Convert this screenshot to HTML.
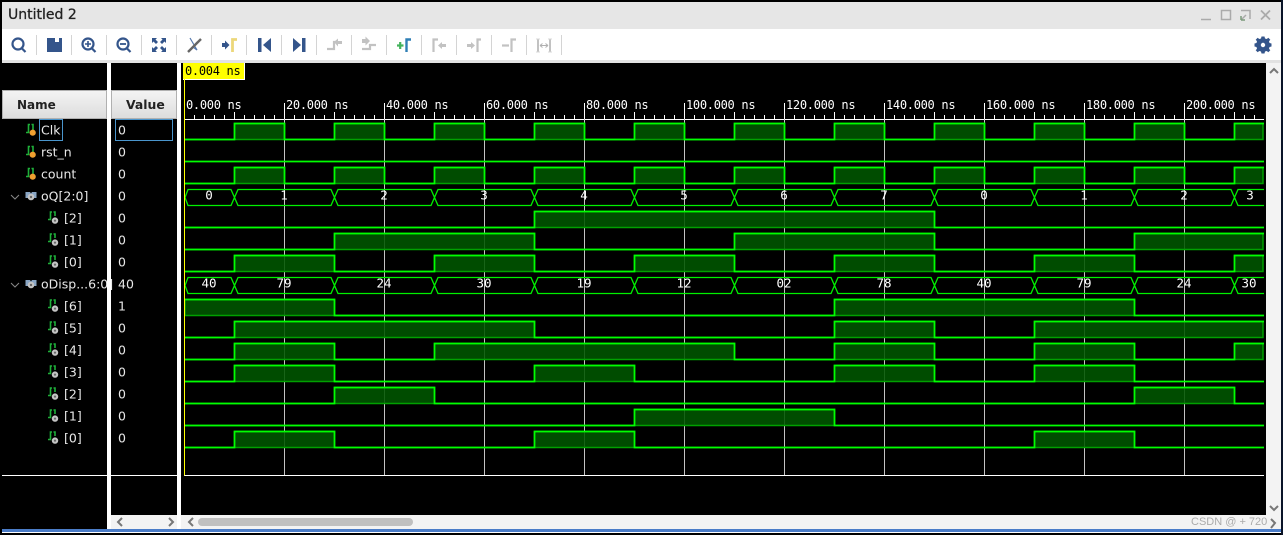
<!DOCTYPE html>
<html><head><meta charset="utf-8"><style>
html,body{margin:0;padding:0;background:#000;width:1283px;height:535px;overflow:hidden}
svg{display:block}
.n{font:12.5px "DejaVu Sans",sans-serif;fill:#e8e8e8}
.t{font:12px "DejaVu Sans Mono","Liberation Mono",monospace;letter-spacing:-.3px;fill:#fff}
.b{font:12.5px "DejaVu Sans Mono","Liberation Mono",monospace;fill:#fff;text-anchor:middle}
.f{fill:#005600;fill-opacity:.88;stroke:#00a000;stroke-width:1.5}
.l{fill:none;stroke:#00ff00;stroke-width:1.7}
.h{fill:none;stroke:#00f000;stroke-width:1.3}
.s{stroke:#d4d4d4;stroke-width:1}
.ib{fill:none;stroke:#34558b;stroke-width:2.2}
.ig{fill:none;stroke:#c2c2c2;stroke-width:2.2}
.ch{fill:none;stroke:#777;stroke-width:2}
.sg{fill:none;stroke:#1fb03a;stroke-width:1.6}
.od{fill:#f0a030}
.gd{fill:#c4c4c4}
.gi{fill:#666}
</style></head><body>
<svg width="1283" height="535" viewBox="0 0 1283 535" xmlns="http://www.w3.org/2000/svg">
<rect width="1283" height="535" fill="#000"/>
<!-- title bar + toolbar -->
<rect x="2" y="2" width="1279" height="27" fill="#e6e6e6"/>
<rect x="2" y="29" width="1279" height="31" fill="#fff"/>
<rect x="2" y="60" width="1279" height="3" fill="#e2e2e2"/>
<text x="8" y="19" style="font:14px 'DejaVu Sans',sans-serif;fill:#222;stroke:#222;stroke-width:.25">Untitled 2</text>
<!-- window controls -->
<path d="M1201 19.500H1211" stroke="#aaa" stroke-width="1.500"/>
<rect x="1221.500" y="10.500" width="9" height="9" fill="none" stroke="#aaa" stroke-width="1.500"/>
<path d="M1241 10.500H1250V19M1241 20L1246 15" fill="none" stroke="#aaa" stroke-width="1.500"/>
<path d="M1241 20V16M1241 20H1245" fill="none" stroke="#7c9a7c" stroke-width="1.500"/>
<path d="M1261 10.500L1270 19.500M1270 10.500L1261 19.500" stroke="#aaa" stroke-width="1.800"/>
<!-- separators -->
<path class="s" d="M36.500 35V55M71.500 35V55M106.500 35V55M141.500 35V55M176.500 35V55M211.500 35V55M246.500 35V55M281.500 35V55M316.500 35V55M351.500 35V55M386.500 35V55M421.500 35V55M456.500 35V55M491.500 35V55M526.500 35V55M561.500 35V55"/>
<!-- magnifiers -->
<circle cx="18" cy="44" r="5.500" class="ib"/><path d="M22 48.500L25.500 52" class="ib" stroke-width="2.800"/>
<path d="M47 38H55V42H59V38H62V52H47Z" fill="#34558b"/>
<circle cx="88" cy="44" r="5.500" class="ib"/><path d="M92 48.500L95.500 52" class="ib" stroke-width="2.800"/><path d="M85 44H91M88 41V47" stroke="#34558b" stroke-width="1.600"/>
<circle cx="123" cy="44" r="5.500" class="ib"/><path d="M127 48.500L130.500 52" class="ib" stroke-width="2.800"/><path d="M120 44H126" stroke="#34558b" stroke-width="1.800"/>
<!-- fit -->
<path d="M152 38H157L155.500 39.500L158 42L156 44L153.500 41.500L152 43ZM166 38H161L162.500 39.500L160 42L162 44L164.500 41.500L166 43ZM152 52H157L155.500 50.500L158 48L156 46L153.500 48.500L152 47ZM166 52H161L162.500 50.500L160 48L162 46L164.500 48.500L166 47Z" fill="#34558b"/>
<!-- cursor off -->
<path d="M190 38L197 50L193 47L197 42" fill="none" stroke="#5578ad" stroke-width="1.200"/>
<path d="M188 52L201 39" stroke="#666" stroke-width="2.400"/>
<!-- goto cursor -->
<path d="M222 43H225V40.500L229.500 45L225 49.500V47H222Z" fill="#34558b"/>
<path d="M232.500 52V39.500H237" fill="none" stroke="#ecd77a" stroke-width="2.800"/>
<!-- begin/end -->
<path d="M258 38H261.500V52H258ZM263 45L271 38V52Z" fill="#34558b"/>
<path d="M293 38L301 45L293 52ZM302 38H305.500V52H302Z" fill="#34558b"/>
<!-- gray 1 -->
<path d="M327 49H334V42H337" class="ig"/><path d="M334 42L338 38.500V41H342V44H338V46.500Z" fill="#c2c2c2"/>
<!-- gray 2 -->
<path d="M362 43V39H365.500V36.500L370 41L365.500 45.500V43Z" fill="#c2c2c2"/><path d="M362 49H370V45H376" class="ig"/>
<!-- add marker -->
<path d="M397 45.500H403.500M400.200 42V49" stroke="#44b35c" stroke-width="2.200"/>
<path d="M406.500 52V39.500H411" fill="none" stroke="#2f7fb5" stroke-width="2.400"/>
<!-- gray markers -->
<path d="M433.500 52V39.500H438" class="ig"/><path d="M438 45.500L442 42V44H446V47H442V49Z" fill="#c2c2c2"/>
<path d="M467 44H471V42L475 45.500L471 49V47H467Z" fill="#c2c2c2"/><path d="M477.500 52V39.500H481" class="ig"/>
<path d="M502 45.500H509" class="ig"/><path d="M511.500 52V39.500H516" class="ig"/>
<path d="M538 39V52M550 39V52" stroke="#c2c2c2" stroke-width="2"/><path d="M540 45.500H548M540 45.500L542.500 43.500M540 45.500L542.500 47.500M548 45.500L545.500 43.500M548 45.500L545.500 47.500" stroke="#b0b0b0" stroke-width="1" fill="none"/><path d="M536 39H540M536 52H540M548 39H552M548 52H552" stroke="#d8d8d8" stroke-width="1"/>
<!-- gear -->
<path d="M1261.500 38.500H1264.500L1265 40.500L1266.800 41L1268.300 39.700L1270.300 41.700L1269 43.200L1269.500 45L1271.500 45.500V48.500L1269.500 49L1269 50.800L1270.300 52.300L1268.300 54.300L1266.800 53L1265 53.500L1264.500 55.500H1261.500L1261 53.500L1259.200 53L1257.700 54.300L1255.700 52.300L1257 50.800L1256.500 49L1254.500 48.500V45.500L1256.500 45L1257 43.200L1255.700 41.700L1257.700 39.700L1259.200 41L1261 40.500Z" fill="#34558b" transform="translate(0,-2)"/>
<circle cx="1263" cy="45" r="2.200" fill="#fff"/>
<!-- marker label -->
<rect x="183" y="63" width="61" height="16" fill="#ffff00"/>
<path d="M183 79.500H244.500V63" fill="none" stroke="#fff" stroke-width="1"/>
<text x="185" y="75" class="t" style="fill:#000">0.004 ns</text>
<!-- header buttons -->
<defs><linearGradient id="g" x1="0" y1="0" x2="0" y2="1"><stop offset="0" stop-color="#f4f4f4"/><stop offset="1" stop-color="#dcdcdc"/></linearGradient></defs>
<rect x="2.500" y="90.500" width="104" height="28" fill="url(#g)" stroke="#b0b0b0"/>
<rect x="111.500" y="90.500" width="65" height="28" fill="url(#g)" stroke="#b0b0b0"/>
<text x="17" y="109" style="font:bold 12px 'DejaVu Sans',sans-serif;fill:#222">Name</text>
<text x="126" y="109" style="font:bold 12.400px 'DejaVu Sans',sans-serif;fill:#222">Value</text>
<!-- names -->
<g class="n">
<text x="41" y="134.500">Clk</text><text x="41" y="156.500">rst_n</text><text x="41" y="178.500">count</text><text x="41" y="200.500">oQ[2:0]</text>
<text x="64" y="222.500">[2]</text><text x="64" y="244.500">[1]</text><text x="64" y="266.500">[0]</text>
<text x="41" y="288.500">oDisp...6:0]</text>
<text x="64" y="310.500">[6]</text><text x="64" y="332.500">[5]</text><text x="64" y="354.500">[4]</text><text x="64" y="376.500">[3]</text><text x="64" y="398.500">[2]</text><text x="64" y="420.500">[1]</text><text x="64" y="442.500">[0]</text>
<text x="118" y="134.500">0</text><text x="118" y="156.500">0</text><text x="118" y="178.500">0</text><text x="118" y="200.500">0</text><text x="118" y="222.500">0</text><text x="118" y="244.500">0</text><text x="118" y="266.500">0</text><text x="118" y="288.500">40</text><text x="118" y="310.500">1</text><text x="118" y="332.500">0</text><text x="118" y="354.500">0</text><text x="118" y="376.500">0</text><text x="118" y="398.500">0</text><text x="118" y="420.500">0</text><text x="118" y="442.500">0</text>
</g>
<!-- name icons: top level -->
<path class="sg" d="M26 132.500H28.500V124.500H30M31.500 124.500H33V130"/><circle cx="32.700" cy="132.700" r="3.100" class="od"/>
<path class="sg" d="M26 154.500H28.500V146.500H30M31.500 146.500H33V152"/><circle cx="32.700" cy="154.700" r="3.100" class="od"/>
<path class="sg" d="M26 176.500H28.500V168.500H30M31.500 168.500H33V174"/><circle cx="32.700" cy="176.700" r="3.100" class="od"/>
<path d="M11 195L15 199L19 195" fill="none" stroke="#888" stroke-width="1"/>
<path d="M11 283L15 287L19 283" fill="none" stroke="#888" stroke-width="1"/>
<path d="M25.500 192H30L31 193.500L32 192H36.500V198H25.500Z" fill="#8aa6c4"/><circle cx="31" cy="197" r="3.300" class="gd"/><circle cx="31" cy="197" r="1.200" class="gi"/>
<path d="M25.500 280H30L31 281.500L32 280H36.500V286H25.500Z" fill="#8aa6c4"/><circle cx="31" cy="285" r="3.300" class="gd"/><circle cx="31" cy="285" r="1.200" class="gi"/>
<!-- child icons -->
<path class="sg" d="M48 219.500H50.500V212H52M53.500 212H55V216"/><circle cx="55" cy="220.600" r="3.200" class="gd"/><circle cx="55" cy="220.600" r="1.100" class="gi"/>
<path class="sg" d="M48 241.500H50.500V234H52M53.500 234H55V238"/><circle cx="55" cy="242.600" r="3.200" class="gd"/><circle cx="55" cy="242.600" r="1.100" class="gi"/>
<path class="sg" d="M48 263.500H50.500V256H52M53.500 256H55V260"/><circle cx="55" cy="264.600" r="3.200" class="gd"/><circle cx="55" cy="264.600" r="1.100" class="gi"/>
<path class="sg" d="M48 307.500H50.500V300H52M53.500 300H55V304"/><circle cx="55" cy="308.600" r="3.200" class="gd"/><circle cx="55" cy="308.600" r="1.100" class="gi"/>
<path class="sg" d="M48 329.500H50.500V322H52M53.500 322H55V326"/><circle cx="55" cy="330.600" r="3.200" class="gd"/><circle cx="55" cy="330.600" r="1.100" class="gi"/>
<path class="sg" d="M48 351.500H50.500V344H52M53.500 344H55V348"/><circle cx="55" cy="352.600" r="3.200" class="gd"/><circle cx="55" cy="352.600" r="1.100" class="gi"/>
<path class="sg" d="M48 373.500H50.500V366H52M53.500 366H55V370"/><circle cx="55" cy="374.600" r="3.200" class="gd"/><circle cx="55" cy="374.600" r="1.100" class="gi"/>
<path class="sg" d="M48 395.500H50.500V388H52M53.500 388H55V392"/><circle cx="55" cy="396.600" r="3.200" class="gd"/><circle cx="55" cy="396.600" r="1.100" class="gi"/>
<path class="sg" d="M48 417.500H50.500V410H52M53.500 410H55V414"/><circle cx="55" cy="418.600" r="3.200" class="gd"/><circle cx="55" cy="418.600" r="1.100" class="gi"/>
<path class="sg" d="M48 439.500H50.500V432H52M53.500 432H55V436"/><circle cx="55" cy="440.600" r="3.200" class="gd"/><circle cx="55" cy="440.600" r="1.100" class="gi"/>
<!-- selection boxes -->
<rect x="39.500" y="119.500" width="23" height="21" fill="none" stroke="#4a95cc"/>
<rect x="115.500" y="119.500" width="57" height="21" fill="none" stroke="#4a95cc"/>
<!-- column dividers -->
<rect x="107" y="63" width="4" height="466" fill="#fff"/>
<rect x="177" y="63" width="4" height="466" fill="#fff"/>
<!-- horizontal lower line -->
<path d="M2 475.500H107M111 475.500H177M184 475.500H1264" stroke="#fff" stroke-width="1"/>
<!-- ruler -->
<text class="t" y="109" x="186">0.000 ns</text>
<text class="t" y="109" x="286">20.000 ns</text><text class="t" y="109" x="386">40.000 ns</text><text class="t" y="109" x="486">60.000 ns</text><text class="t" y="109" x="586">80.000 ns</text><text class="t" y="109" x="686">100.000 ns</text><text class="t" y="109" x="786">120.000 ns</text><text class="t" y="109" x="886">140.000 ns</text><text class="t" y="109" x="986">160.000 ns</text><text class="t" y="109" x="1086">180.000 ns</text><text class="t" y="109" x="1186">200.000 ns</text>
<path d="M184 119.500H1264" stroke="#fff" stroke-width="1"/>
<path stroke="#fff" stroke-width="1" d="M194.500 115V119M204.500 115V119M214.500 115V119M224.500 115V119M234.500 112V119M244.500 115V119M254.500 115V119M264.500 115V119M274.500 115V119M294.500 115V119M304.500 115V119M314.500 115V119M324.500 115V119M334.500 112V119M344.500 115V119M354.500 115V119M364.500 115V119M374.500 115V119M394.500 115V119M404.500 115V119M414.500 115V119M424.500 115V119M434.500 112V119M444.500 115V119M454.500 115V119M464.500 115V119M474.500 115V119M494.500 115V119M504.500 115V119M514.500 115V119M524.500 115V119M534.500 112V119M544.500 115V119M554.500 115V119M564.500 115V119M574.500 115V119M594.500 115V119M604.500 115V119M614.500 115V119M624.500 115V119M634.500 112V119M644.500 115V119M654.500 115V119M664.500 115V119M674.500 115V119M694.500 115V119M704.500 115V119M714.500 115V119M724.500 115V119M734.500 112V119M744.500 115V119M754.500 115V119M764.500 115V119M774.500 115V119M794.500 115V119M804.500 115V119M814.500 115V119M824.500 115V119M834.500 112V119M844.500 115V119M854.500 115V119M864.500 115V119M874.500 115V119M894.500 115V119M904.500 115V119M914.500 115V119M924.500 115V119M934.500 112V119M944.500 115V119M954.500 115V119M964.500 115V119M974.500 115V119M994.500 115V119M1004.500 115V119M1014.500 115V119M1024.500 115V119M1034.500 112V119M1044.500 115V119M1054.500 115V119M1064.500 115V119M1074.500 115V119M1094.500 115V119M1104.500 115V119M1114.500 115V119M1124.500 115V119M1134.500 112V119M1144.500 115V119M1154.500 115V119M1164.500 115V119M1174.500 115V119M1194.500 115V119M1204.500 115V119M1214.500 115V119M1224.500 115V119M1234.500 112V119M1244.500 115V119M1254.500 115V119"/>
<path stroke="#fff" stroke-width="1" d="M284.500 103V119M384.500 103V119M484.500 103V119M584.500 103V119M684.500 103V119M784.500 103V119M884.500 103V119M984.500 103V119M1084.500 103V119M1184.500 103V119"/>
<!-- grid -->
<path stroke="#c4c4c4" stroke-width="1" d="M284.500 119V475M384.500 119V475M484.500 119V475M584.500 119V475M684.500 119V475M784.500 119V475M884.500 119V475M984.500 119V475M1084.500 119V475M1184.500 119V475"/>
<!-- waves -->
<g transform="translate(0,123.500)"><path class="f" d="M185 16H234.500V0H284.500V16H334.500V0H384.500V16H434.500V0H484.500V16H534.500V0H584.500V16H634.500V0H684.500V16H734.500V0H784.500V16H834.500V0H884.500V16H934.500V0H984.500V16H1034.500V0H1084.500V16H1134.500V0H1184.500V16H1234.500V0H1263V16H185Z"/><path class="l" d="M185 16H234.500V0H284.500V16H334.500V0H384.500V16H434.500V0H484.500V16H534.500V0H584.500V16H634.500V0H684.500V16H734.500V0H784.500V16H834.500V0H884.500V16H934.500V0H984.500V16H1034.500V0H1084.500V16H1134.500V0H1184.500V16H1234.500V0H1264"/></g>
<g transform="translate(0,145.500)"><path class="l" d="M185 16H1264"/></g>
<g transform="translate(0,167.500)"><path class="f" d="M185 16H234.500V0H284.500V16H334.500V0H384.500V16H434.500V0H484.500V16H534.500V0H584.500V16H634.500V0H684.500V16H734.500V0H784.500V16H834.500V0H884.500V16H934.500V0H984.500V16H1034.500V0H1084.500V16H1134.500V0H1184.500V16H1234.500V0H1263V16H185Z"/><path class="l" d="M185 16H234.500V0H284.500V16H334.500V0H384.500V16H434.500V0H484.500V16H534.500V0H584.500V16H634.500V0H684.500V16H734.500V0H784.500V16H834.500V0H884.500V16H934.500V0H984.500V16H1034.500V0H1084.500V16H1134.500V0H1184.500V16H1234.500V0H1264"/></g>
<g transform="translate(0,189.500)"><path class="h" d="M185 8L188 0H231L234.500 8L231 16H188ZM234.500 8L238 0H331L334.500 8L331 16H238ZM334.500 8L338 0H431L434.500 8L431 16H338ZM434.500 8L438 0H531L534.500 8L531 16H438ZM534.500 8L538 0H631L634.500 8L631 16H538ZM634.500 8L638 0H731L734.500 8L731 16H638ZM734.500 8L738 0H831L834.500 8L831 16H738ZM834.500 8L838 0H931L934.500 8L931 16H838ZM934.500 8L938 0H1031L1034.500 8L1031 16H938ZM1034.500 8L1038 0H1131L1134.500 8L1131 16H1038ZM1134.500 8L1138 0H1231L1234.500 8L1231 16H1138ZM1234.500 8L1238 0H1264M1234.500 8L1238 16H1264"/></g>
<g transform="translate(0,211.500)"><path class="f" d="M185 16H534.500V0H934.500V16H185Z"/><path class="l" d="M185 16H534.500V0H934.500V16H1264"/></g>
<g transform="translate(0,233.500)"><path class="f" d="M185 16H334.500V0H534.500V16H734.500V0H934.500V16H1134.500V0H1263V16H185Z"/><path class="l" d="M185 16H334.500V0H534.500V16H734.500V0H934.500V16H1134.500V0H1264"/></g>
<g transform="translate(0,255.500)"><path class="f" d="M185 16H234.500V0H334.500V16H434.500V0H534.500V16H634.500V0H734.500V16H834.500V0H934.500V16H1034.500V0H1134.500V16H1234.500V0H1263V16H185Z"/><path class="l" d="M185 16H234.500V0H334.500V16H434.500V0H534.500V16H634.500V0H734.500V16H834.500V0H934.500V16H1034.500V0H1134.500V16H1234.500V0H1264"/></g>
<g transform="translate(0,277.500)"><path class="h" d="M185 8L188 0H231L234.500 8L231 16H188ZM234.500 8L238 0H331L334.500 8L331 16H238ZM334.500 8L338 0H431L434.500 8L431 16H338ZM434.500 8L438 0H531L534.500 8L531 16H438ZM534.500 8L538 0H631L634.500 8L631 16H538ZM634.500 8L638 0H731L734.500 8L731 16H638ZM734.500 8L738 0H831L834.500 8L831 16H738ZM834.500 8L838 0H931L934.500 8L931 16H838ZM934.500 8L938 0H1031L1034.500 8L1031 16H938ZM1034.500 8L1038 0H1131L1134.500 8L1131 16H1038ZM1134.500 8L1138 0H1231L1234.500 8L1231 16H1138ZM1234.500 8L1238 0H1264M1234.500 8L1238 16H1264"/></g>
<g transform="translate(0,299.500)"><path class="f" d="M185 0H334.500V16H834.500V0H1134.500V16H185Z"/><path class="l" d="M185 0H334.500V16H834.500V0H1134.500V16H1264"/></g>
<g transform="translate(0,321.500)"><path class="f" d="M185 16H234.500V0H534.500V16H834.500V0H934.500V16H1034.500V0H1263V16H185Z"/><path class="l" d="M185 16H234.500V0H534.500V16H834.500V0H934.500V16H1034.500V0H1264"/></g>
<g transform="translate(0,343.500)"><path class="f" d="M185 16H234.500V0H334.500V16H434.500V0H734.500V16H834.500V0H934.500V16H1034.500V0H1134.500V16H1234.500V0H1263V16H185Z"/><path class="l" d="M185 16H234.500V0H334.500V16H434.500V0H734.500V16H834.500V0H934.500V16H1034.500V0H1134.500V16H1234.500V0H1264"/></g>
<g transform="translate(0,365.500)"><path class="f" d="M185 16H234.500V0H334.500V16H534.500V0H634.500V16H834.500V0H934.500V16H1034.500V0H1134.500V16H185Z"/><path class="l" d="M185 16H234.500V0H334.500V16H534.500V0H634.500V16H834.500V0H934.500V16H1034.500V0H1134.500V16H1264"/></g>
<g transform="translate(0,387.500)"><path class="f" d="M185 16H334.500V0H434.500V16H1134.500V0H1234.500V16H185Z"/><path class="l" d="M185 16H334.500V0H434.500V16H1134.500V0H1234.500V16H1264"/></g>
<g transform="translate(0,409.500)"><path class="f" d="M185 16H634.500V0H834.500V16H185Z"/><path class="l" d="M185 16H634.500V0H834.500V16H1264"/></g>
<g transform="translate(0,431.500)"><path class="f" d="M185 16H234.500V0H334.500V16H534.500V0H634.500V16H1034.500V0H1134.500V16H185Z"/><path class="l" d="M185 16H234.500V0H334.500V16H534.500V0H634.500V16H1034.500V0H1134.500V16H1264"/></g>
<!-- bus labels -->
<g class="b">
<text x="209" y="199.500">0</text><text x="284" y="199.500">1</text><text x="384" y="199.500">2</text><text x="484" y="199.500">3</text><text x="584" y="199.500">4</text><text x="684" y="199.500">5</text><text x="784" y="199.500">6</text><text x="884" y="199.500">7</text><text x="984" y="199.500">0</text><text x="1084" y="199.500">1</text><text x="1184" y="199.500">2</text><text x="1250" y="199.500">3</text>
<text x="209" y="287.500">40</text><text x="284" y="287.500">79</text><text x="384" y="287.500">24</text><text x="484" y="287.500">30</text><text x="584" y="287.500">19</text><text x="684" y="287.500">12</text><text x="784" y="287.500">02</text><text x="884" y="287.500">78</text><text x="984" y="287.500">40</text><text x="1084" y="287.500">79</text><text x="1184" y="287.500">24</text><text x="1249" y="287.500">30</text>
</g>
<!-- cursor -->
<path d="M184.500 79V475.500" stroke="#ffff00" stroke-width="1"/>
<!-- scrollbars -->
<rect x="1266" y="63" width="15" height="466" fill="#f3f3f3"/>
<rect x="111" y="515" width="1170" height="14" fill="#f3f3f3"/>
<rect x="177" y="515" width="4" height="14" fill="#fff"/>
<rect x="198" y="518" width="215" height="8" rx="4" fill="#c0c0c0"/>
<path class="ch" d="M122 518L118 522L122 526M169 518L173 522L169 526M193 518L189 522L193 526M1271 519L1275 523L1271 528M1270 73L1274 69L1278 73M1270 506L1274 510L1278 506"/>
<text x="1191" y="525" style="font:11px 'Liberation Sans',sans-serif;fill:#ababab">CSDN @ + 720</text>
<rect x="2" y="529" width="1279" height="3" fill="#4a7cc8"/>
<rect x="2" y="532" width="1279" height="1" fill="#fff"/>
<rect x="1281" y="0" width="2" height="535" fill="#0a1428"/>
</svg>
</body></html>
